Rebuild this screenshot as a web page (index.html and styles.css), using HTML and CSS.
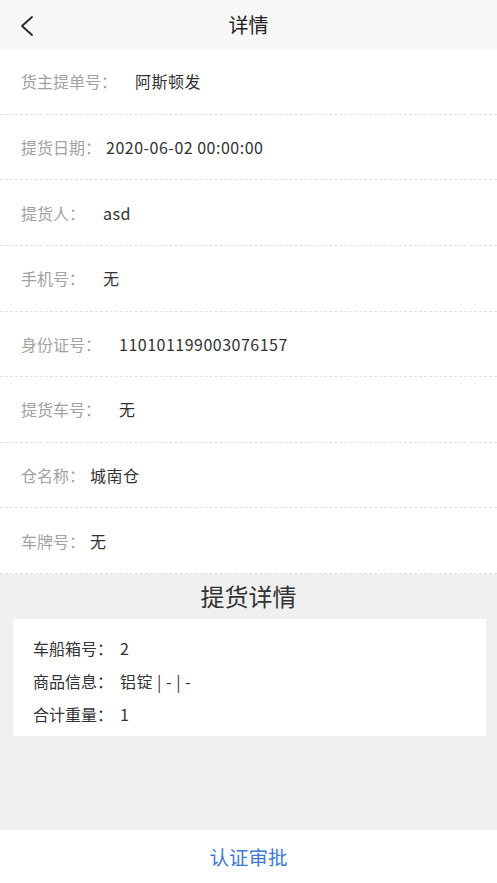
FILE: index.html
```html
<!DOCTYPE html>
<html lang="zh-CN">
<head>
<meta charset="utf-8">
<title>详情</title>
<link rel="stylesheet" href="styles.css">
</head>
<body>
<div class="page">
  <header class="topbar">
    <span class="back">
      <svg width="14" height="20" viewBox="0 0 14 20"><path d="M12 1 L2 10 L12 19" fill="none" stroke="#222" stroke-width="1.8" stroke-linecap="round" stroke-linejoin="round"/></svg>
    </span>
    <h1 class="title">详情</h1>
  </header>
  <main class="content">
    <ul class="info">
      <li class="row"><span class="label">货主提单号：</span><span class="value wide">阿斯顿发</span></li>
      <li class="row"><span class="label">提货日期：</span><span class="value">2020-06-02 00:00:00</span></li>
      <li class="row"><span class="label">提货人：</span><span class="value wide">asd</span></li>
      <li class="row"><span class="label">手机号：</span><span class="value wide">无</span></li>
      <li class="row"><span class="label">身份证号：</span><span class="value wide">110101199003076157</span></li>
      <li class="row"><span class="label">提货车号：</span><span class="value wide">无</span></li>
      <li class="row"><span class="label">仓名称：</span><span class="value">城南仓</span></li>
      <li class="row"><span class="label">车牌号：</span><span class="value">无</span></li>
    </ul>
    <section class="detail">
      <h2 class="detail-title">提货详情</h2>
      <div class="card">
        <p class="item"><span>车船箱号：</span><span class="item-value">2</span></p>
        <p class="item"><span>商品信息：</span><span class="item-value">铝锭 | - | -</span></p>
        <p class="item"><span>合计重量：</span><span class="item-value">1</span></p>
      </div>
    </section>
  </main>
  <footer class="bottombar">
    <button class="action">认证审批</button>
  </footer>
</div>
</body>
</html>
```

FILE: styles.css
```css
html, body {
  margin: 0;
  padding: 0;
  height: 100%;
}
body {
  font-family: "Noto Sans CJK SC", "Noto Sans", sans-serif;
  background: #f0f0f0;
  color: #333;
}
.page {
  display: flex;
  flex-direction: column;
  height: 100vh;
}
.topbar {
  position: relative;
  height: 49px;
  background: #f7f7f7;
  display: flex;
  align-items: center;
  justify-content: center;
  flex-shrink: 0;
}
.back {
  position: absolute;
  left: 20px;
  top: 16px;
  display: flex;
}
.title {
  margin: 0;
  font-size: 20px;
  font-weight: 400;
  color: #222;
}
.content {
  flex: 1;
  display: flex;
  flex-direction: column;
}
.info {
  list-style: none;
  margin: 0;
  padding: 0;
  background: #fff;
}
.row {
  box-sizing: border-box;
  height: 65.625px;
  display: flex;
  align-items: center;
  padding-left: 21px;
  border-bottom: 1px dashed #e2e2e2;
  font-size: 16px;
}
.label {
  color: #a2a2a2;
}
.value {
  color: #333;
  margin-left: 5px;
  letter-spacing: 0.5px;
}
.value.wide {
  margin-left: 18px;
}
.detail {
  background: #f0f0f0;
}
.detail-title {
  margin: 0;
  box-sizing: border-box;
  height: 45px;
  padding-bottom: 3px;
  display: flex;
  align-items: center;
  justify-content: center;
  font-size: 24px;
  font-weight: 400;
  color: #333;
}
.card {
  background: #fff;
  margin: 0 11px 0 13px;
  padding: 13px 20px 5px;
}
.item {
  margin: 0;
  height: 33px;
  line-height: 33px;
  font-size: 16px;
  color: #333;
}
.item-value {
  margin-left: 7px;
  letter-spacing: 0.5px;
}
.bottombar {
  height: 53px;
  background: #fff;
  display: flex;
  align-items: center;
  justify-content: center;
  flex-shrink: 0;
}
.action {
  border: none;
  background: none;
  font-family: inherit;
  font-size: 19.5px;
  color: #3d7ad6;
  padding: 0;
}
```
